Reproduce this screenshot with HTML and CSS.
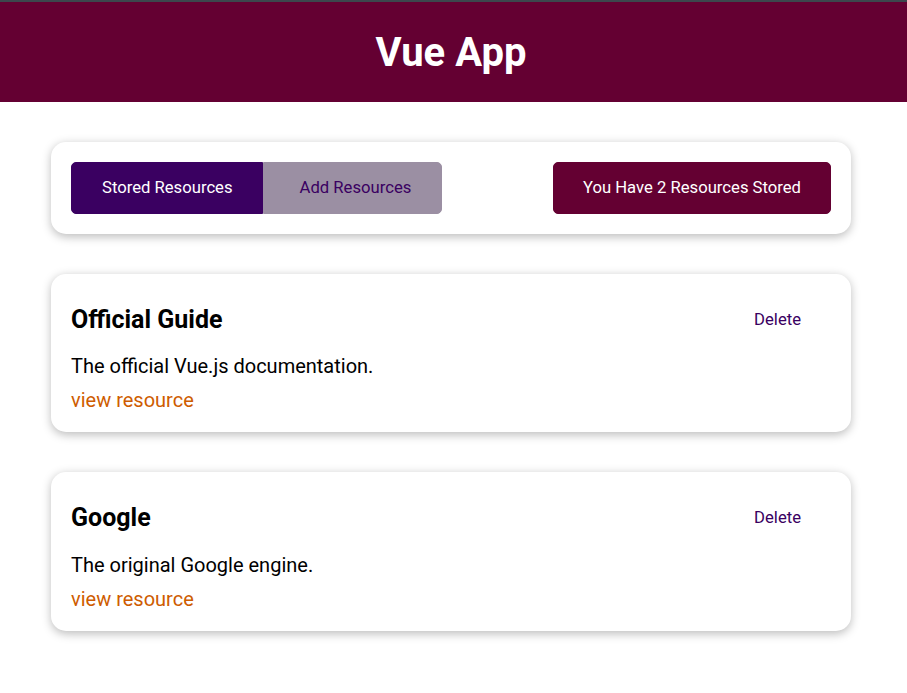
FILE: index.html
```html
<!DOCTYPE html>
<html lang="en">
<head>
<meta charset="utf-8">
<title>Vue App</title>
<link rel="stylesheet" href="styles.css">
</head>
<body>
<div class="topline"></div>
<header class="app-header">
  <h1>Vue App</h1>
</header>
<main class="app-main">
  <section class="card nav-card">
    <div class="tabs">
      <button class="btn">Stored Resources</button>
      <button class="btn btn-muted">Add Resources</button>
    </div>
    <button class="btn btn-accent">You Have 2 Resources Stored</button>
  </section>
  <ul class="resource-list">
    <li class="card resource">
      <div class="resource-head">
        <h3>Official Guide</h3>
        <button class="btn btn-flat">Delete</button>
      </div>
      <p>The official Vue.js documentation.</p>
      <a href="#" class="link">view resource</a>
    </li>
    <li class="card resource">
      <div class="resource-head">
        <h3>Google</h3>
        <button class="btn btn-flat">Delete</button>
      </div>
      <p>The original Google engine.</p>
      <a href="#" class="link">view resource</a>
    </li>
  </ul>
</main>
</body>
</html>
```
FILE: styles.css
```css
* { box-sizing: border-box; }
html { font-family: Roboto, "Liberation Sans", sans-serif; font-size: 20px; }
body { margin: 0; background: #fff; color: #000; }

.topline { height: 2px; background: #3c474d; }

.app-header {
  height: 100px;
  background: #640032;
  display: flex;
  justify-content: center;
  align-items: center;
  padding-right: 5px;
}
.app-header h1 {
  margin: 0;
  color: #fff;
  font-size: 40px;
  font-weight: 700;
}

.app-main { padding-right: 5px; }

.card {
  max-width: 800px;
  margin: 40px auto;
  padding: 20px;
  border-radius: 15px;
  background: #fff;
  box-shadow: 0 2.5px 10px rgba(0, 0, 0, 0.26);
}

.nav-card {
  display: flex;
  justify-content: space-between;
  align-items: center;
}
.tabs { display: flex; }

.btn {
  font-family: Roboto, "Liberation Sans", sans-serif;
  font-size: 16.67px;
  line-height: 19.5px;
  padding: 15px 30px;
  background: #3a0061;
  border: 1px solid #3a0061;
  color: #fff;
  border-radius: 5px;
  cursor: pointer;
}
.btn-muted {
  background: #9b8fa3;
  border-color: #9b8fa3;
  color: #3a0061;
  padding: 15px 30px 15px 36px;
}
.tabs .btn:first-child { border-radius: 5px 0 0 5px; padding-right: 29px; }
.tabs .btn:last-child { border-radius: 0 5px 5px 0; }
.btn-accent { background: #640032; border-color: #640032; padding: 15px 29px; }
.btn-flat { background: transparent; border-color: transparent; color: #3a0061; padding: 15px 29px; }

.resource-list { list-style: none; margin: 0; padding: 0; }

.resource-head {
  display: flex;
  justify-content: space-between;
  align-items: center;
}
.resource-head h3 { margin: 0; font-size: 25px; font-weight: 700; }
.resource p { margin: 10px 0; line-height: 23px; }
.link { color: #ce5c00; text-decoration: none; line-height: 23px; display: inline-block; }
```
